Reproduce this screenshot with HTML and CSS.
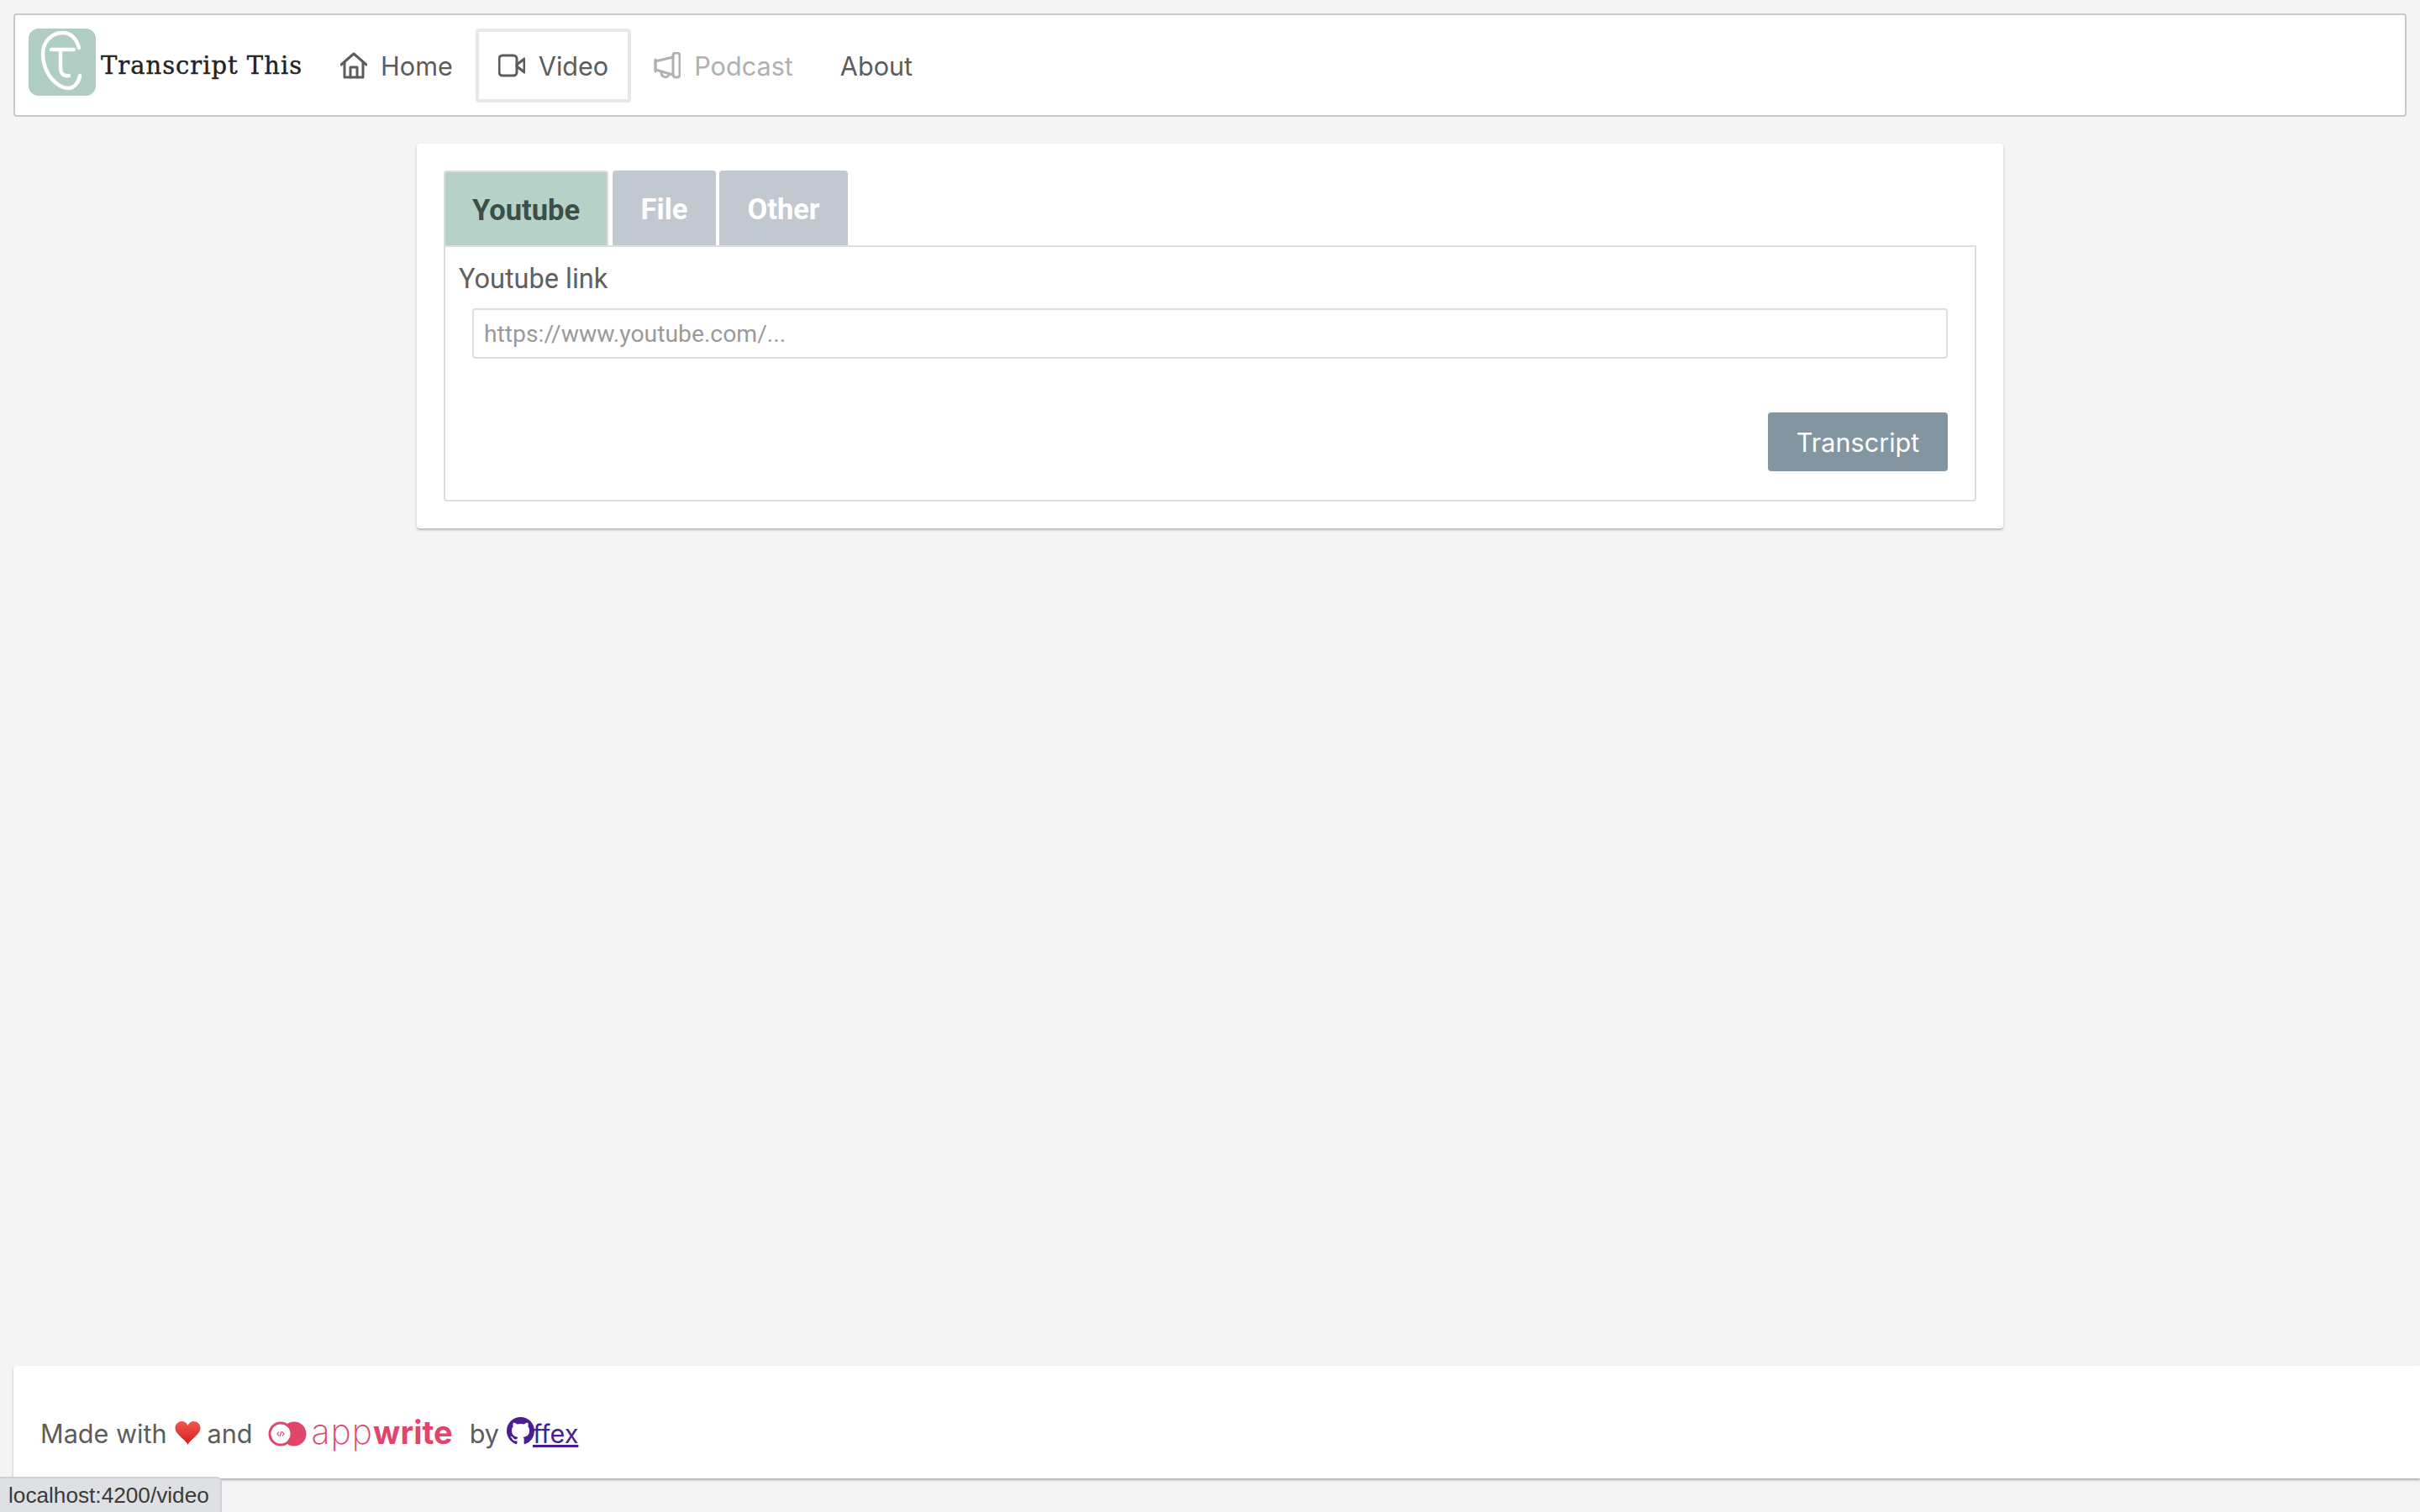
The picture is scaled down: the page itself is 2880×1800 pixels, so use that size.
FILE: index.html
```html
<!DOCTYPE html>
<html lang="en">
<head>
    <meta charset="UTF-8">
    <meta name="viewport" content="width=device-width, initial-scale=1.0">
    <title>Transcript This</title>
    <link rel="stylesheet" href="styles.css">
</head>
<body>
    <div class="page">
        <nav class="navbar">
            <a class="brand" href="#">
                <svg class="brand-logo" viewBox="0 0 80 80">
                    <path d="M60 23C57 11 49 5 41 5C26 5 17 17 17 30C17 45 24 58 33 65C38 69 43 71 47 71C54 71 60 64 61 56" />
                    <path d="M27 25H54" />
                    <path d="M38 25V47C38 54 42 57 48 56" />
                </svg>
                <span class="brand-name">Transcript This</span>
            </a>
            <a class="nav-item" href="#">
                <svg class="nav-icon" viewBox="0 0 32 32">
                    <path d="M1 15L16 2L31 15" />
                    <path d="M5 12V30H27V12" />
                    <path d="M12 30V18H20V30" />
                </svg>
                Home
            </a>
            <a class="nav-item active" href="#">
                <svg class="nav-icon" viewBox="0 0 32 32">
                    <rect x="1" y="4" width="21" height="24" rx="4" />
                    <path d="M22 15L31 8V24L22 17Z" />
                </svg>
                Video
            </a>
            <a class="nav-item disabled" href="#">
                <svg class="nav-icon" viewBox="0 0 32 32">
                    <rect x="23" y="1" width="8" height="29" rx="3" />
                    <path d="M23 6L2 11V21L23 27" />
                    <path d="M2 9V23" />
                    <path d="M9 24C9 31 17 31 18 27" />
                </svg>
                Podcast
            </a>
            <a class="nav-item about" href="#">About</a>
        </nav>

        <main class="card">
            <div class="tabs">
                <button class="tab selected">Youtube</button>
                <button class="tab">File</button>
                <button class="tab">Other</button>
            </div>
            <div class="tab-panel">
                <label class="field-label" for="link">Youtube link</label>
                <input class="field-input" id="link" type="text" placeholder="https://www.youtube.com/...">
                <div class="actions">
                    <button class="btn-primary">Transcript</button>
                </div>
            </div>
        </main>

        <footer class="footer">
            <span>Made with</span>
            <svg class="heart" viewBox="0 0 32 28">
                <defs>
                    <linearGradient id="heart-fill" x1="0" y1="0" x2="0" y2="1">
                        <stop offset="0" stop-color="#f2584f" />
                        <stop offset="1" stop-color="#d81a1f" />
                    </linearGradient>
                </defs>
                <path fill="url(#heart-fill)" d="M16 28C14 22 1 16 1 8C1 3 5 0 9 0C12 0 15 2 16 5C17 2 20 0 23 0C27 0 31 3 31 8C31 16 18 22 16 28Z" />
            </svg>
            <span>and</span>
            <a class="appwrite" href="#">
                <svg class="appwrite-icon" viewBox="0 0 46 30">
                    <circle class="appwrite-back" cx="31" cy="15" r="14.5" />
                    <circle class="appwrite-front" cx="15" cy="15" r="13" />
                    <path class="appwrite-code" d="M13 12.5L11 15L13 17.500M17 12.500L19 15L17 17.500M16 12L14 18" />
                </svg>
                <span class="appwrite-name">app<b>write</b></span>
            </a>
            <span class="by">by</span>
            <a class="author" href="#">
                <svg class="github" viewBox="0 0 16 16">
                    <path d="M8 0C3.58 0 0 3.58 0 8c0 3.54 2.29 6.53 5.47 7.59.4.07.55-.17.55-.38 0-.19-.01-.82-.01-1.49-2.01.37-2.53-.49-2.69-.94-.09-.23-.48-.94-.82-1.13-.28-.15-.68-.52-.01-.53.63-.01 1.08.58 1.23.82.72 1.21 1.87.87 2.33.66.07-.52.28-.87.51-1.07-1.78-.2-3.64-.89-3.64-3.95 0-.87.31-1.59.82-2.15-.08-.2-.36-1.02.08-2.12 0 0 .67-.21 2.2.82.64-.18 1.32-.27 2-.27.68 0 1.36.09 2 .27 1.53-1.04 2.2-.82 2.2-.82.44 1.1.16 1.92.08 2.12.51.56.82 1.27.82 2.15 0 3.07-1.87 3.75-3.65 3.95.29.25.54.73.54 1.48 0 1.07-.01 1.93-.01 2.2 0 .21.15.46.55.38A8.013 8.013 0 0016 8c0-4.42-3.58-8-8-8z" />
                </svg><span class="author-name">ffex</span>
            </a>
        </footer>
    </div>

    <div class="status-bar">localhost:4200/video</div>
</body>
</html>
```

FILE: styles.css
```css
* {
    box-sizing: border-box;
}
body {
    margin: 0;
    background-color: #f4f4f4;
    font-family: Inter, "Liberation Sans", sans-serif;
    font-size: 30.6px;
    color: #5c5c5c;
    overflow: hidden;
}
a {
    color: inherit;
    text-decoration: none;
}
.page {
    display: flex;
    flex-direction: column;
    height: 1800px;
    padding: 16px 16px 40px 16px;
}

/* navbar */
.navbar {
    display: flex;
    align-items: center;
    height: 123px;
    padding: 0 16px;
    background-color: #fff;
    border: 2px solid #c8c8c8;
    border-radius: 4px;
}
.brand {
    display: flex;
    align-items: center;
    margin-right: 18px;
}
.brand-logo {
    width: 80px;
    height: 80px;
    margin-bottom: 7px;
    background-color: #afcdc3;
    border-radius: 12px;
    fill: none;
    stroke: #fff;
    stroke-width: 4.5;
    stroke-linecap: round;
}
.brand-name {
    margin-left: 6px;
    font-family: "DejaVu Serif", serif;
    font-size: 29px;
    letter-spacing: 1px;
    color: #222;
    -webkit-text-stroke: 0.4px #222;
}
.nav-item {
    display: flex;
    align-items: center;
    gap: 16px;
    height: 88px;
    padding: 1px 23px 0;
    border: 4px solid transparent;
    border-radius: 4px;
}
.nav-item.active {
    border-color: #e6e9ec;
}
.nav-item.disabled {
    color: #b0b0b0;
}
.nav-item.about {
    margin-left: 2px;
}
.nav-icon {
    width: 32px;
    height: 32px;
    fill: none;
    stroke: currentColor;
    stroke-width: 3;
    stroke-linejoin: round;
    stroke-linecap: round;
}

/* card */
.card {
    width: 1888px;
    height: 458px;
    margin: 32px auto 0;
    padding: 32px;
    background-color: #fff;
    border-radius: 4px;
    box-shadow: 0 2px 3px rgba(0, 0, 0, 0.25);
}
.tabs {
    display: flex;
    gap: 4px;
}
.tab {
    height: 89px;
    padding: 2px 33.5px 0;
    border: none;
    border-radius: 4px 4px 0 0;
    background-color: #c1c8d0;
    font-family: Roboto, sans-serif;
    font-size: 34.5px;
    font-weight: 700;
    color: #fff;
}
.tab.selected {
    margin-right: 1px;
    padding: 2px 32px 0;
    background-color: #b6d2c8;
    border: 2px solid #ddd;
    border-bottom: none;
    color: #3c4f47;
}
.tab-panel {
    display: flex;
    flex-direction: column;
    height: 305px;
    padding: 18px 32px 34px 16px;
    border: 2px solid #ddd;
    border-radius: 0 0 4px 4px;
}
.field-label {
    font-family: Roboto, sans-serif;
    font-size: 32.5px;
    line-height: 40px;
    color: #606060;
}
.field-input {
    height: 60px;
    margin: 15px 0 0 16px;
    padding: 0 12px;
    border: 2px solid #ddd;
    border-radius: 4px;
    font-family: Roboto, sans-serif;
    font-size: 28.3px;
}
.field-input::placeholder {
    color: #9a9a9a;
}
.actions {
    display: flex;
    justify-content: flex-end;
    margin-top: auto;
}
.btn-primary {
    width: 214px;
    height: 70px;
    border: none;
    border-radius: 4px;
    background-color: #8395a1;
    font-family: Inter, sans-serif;
    font-size: 30.6px;
    color: #fff;
}

/* footer */
.footer {
    display: flex;
    align-items: center;
    gap: 10px;
    height: 134px;
    margin: auto -16px 0 0;
    padding: 26px 32px 0;
    background-color: #fff;
    border-radius: 4px 0 0 4px;
    box-shadow: 0 2px 3px rgba(0, 0, 0, 0.3);
}
.heart {
    width: 33px;
    height: 28px;
    margin: 0 -3px 0 -2px;
}
.appwrite {
    display: flex;
    align-items: center;
    gap: 6px;
    margin-left: 8px;
}
.appwrite-icon {
    width: 46px;
    height: 30px;
    margin-top: 2px;
}
.appwrite-back {
    fill: #e0456b;
}
.appwrite-front {
    fill: #fff;
    stroke: #e0456b;
    stroke-width: 3;
}
.appwrite-code {
    fill: none;
    stroke: #e0456b;
    stroke-width: 1.2;
}
.appwrite-name {
    margin-top: -3px;
    font-family: Inter, sans-serif;
    font-size: 41px;
    font-weight: 200;
    letter-spacing: 1px;
    line-height: 1;
    color: #e0456b;
}
.appwrite-name b {
    font-size: 38px;
    font-weight: 700;
    letter-spacing: 0;
}
.by {
    margin-left: 10px;
}
.author {
    display: flex;
    align-items: center;
    margin-left: -1px;
    color: #4a1d91;
}
.github {
    width: 33px;
    height: 33px;
    margin: -6px -2px 0 0;
    fill: currentColor;
}
.author-name {
    text-decoration: underline;
}

/* browser link preview */
.status-bar {
    position: fixed;
    left: 0;
    bottom: 0;
    width: 264px;
    height: 42px;
    padding: 0 10px;
    background-color: #dfe0e4;
    border: 2px solid #cfd0d3;
    border-left: none;
    border-bottom: none;
    border-top-right-radius: 6px;
    font-family: "Liberation Sans", sans-serif;
    font-size: 26.2px;
    line-height: 40px;
    color: #3a3a3a;
}
```
